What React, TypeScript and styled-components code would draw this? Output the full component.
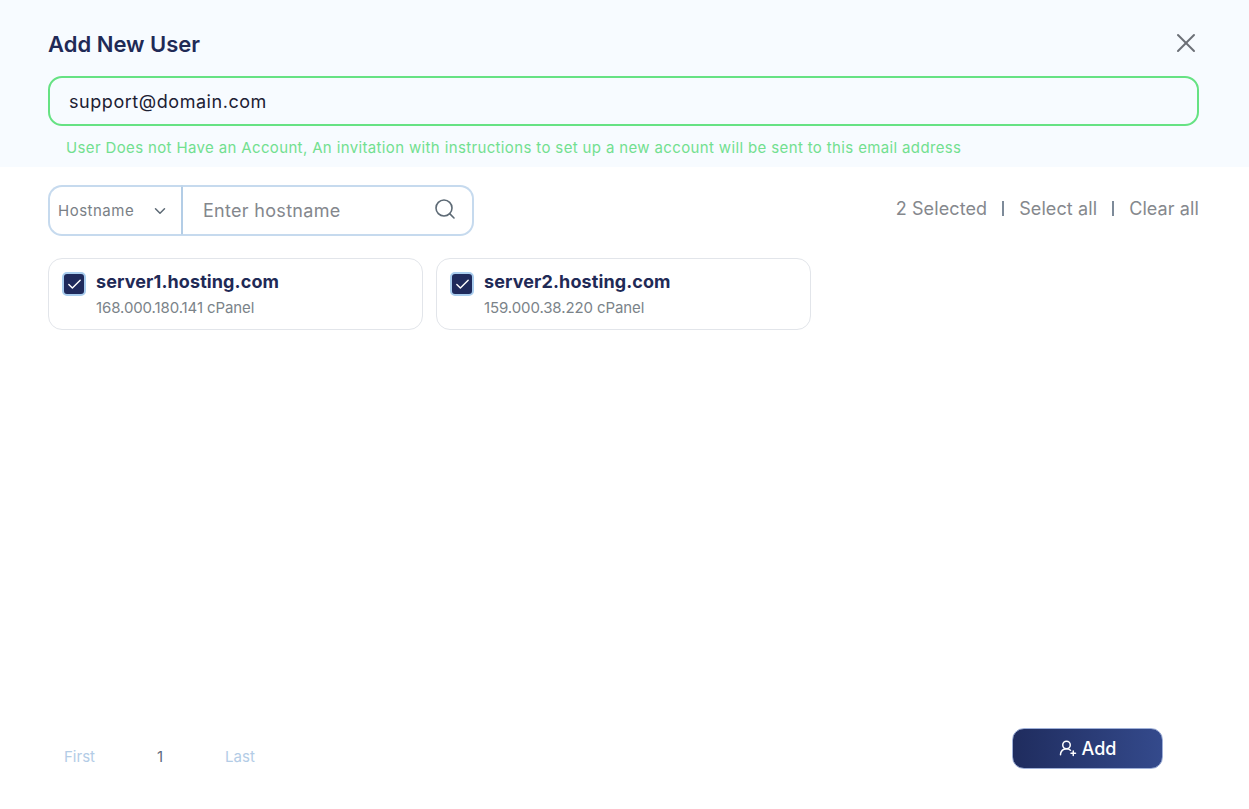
import React from "react";
import styled, {createGlobalStyle} from "styled-components";
import {ChevronDown, Search, X, Check, UserRoundPlus} from "lucide-react";

const GlobalStyle = createGlobalStyle`
  html, body {
    margin: 0;
    background: #fff;
    font-family: "Inter", "Noto Sans", sans-serif;
  }
`

const Page = styled.div`
  width: 1249px;
  height: 809px;
  display: flex;
  flex-direction: column;
  overflow: hidden;
`

const Header = styled.div`
  height: 167px;
  box-sizing: border-box;
  background: #f7fbff;
  padding: 29px 50px 0 48px;
  display: flex;
  flex-direction: column;
`

const TitleRow = styled.div`
  display: flex;
  justify-content: space-between;
  align-items: center;
  height: 31px;
`

const Title = styled.h2`
  margin: 0;
  font-size: 22px;
  line-height: 31px;
  font-weight: 600;
  color: #1f2a56;
`

const CloseIcon = styled(X)`
  color: #6b6f76;
  margin-right: -3px;
  margin-top: -4px;
`

const EmailBox = styled.div`
  margin-top: 16px;
  height: 50px;
  box-sizing: border-box;
  border: 2px solid #66e283;
  border-radius: 14px;
  padding: 0 19px;
  display: flex;
  align-items: center;
  font-size: 18px;
  letter-spacing: 0.55px;
  color: #1c2033;
`

const Hint = styled.p`
  margin: 12px 0 0 18px;
  font-size: 15px;
  line-height: 20px;
  letter-spacing: 0.36px;
  color: #72e08f;
`

const Content = styled.div`
  flex: 1;
  padding: 18px 50px 0 48px;
  display: flex;
  flex-direction: column;
`

const Toolbar = styled.div`
  display: flex;
  justify-content: space-between;
  align-items: center;
`

const SearchGroup = styled.div`
  display: flex;
  height: 51px;
  width: 426px;
`

const SelectBox = styled.div`
  width: 134px;
  box-sizing: border-box;
  border: 2px solid #c6daee;
  border-right: 1px solid #b3cde6;
  border-radius: 14px 0 0 14px;
  padding: 0 12px 0 8px;
  display: flex;
  align-items: center;
  justify-content: space-between;
  font-size: 15px;
  letter-spacing: 0.5px;
  color: #7a7f86;
`

const SearchBox = styled.div`
  flex: 1;
  box-sizing: border-box;
  border: 2px solid #c6daee;
  border-left: 1px solid #b3cde6;
  border-radius: 0 14px 14px 0;
  padding: 0 15px 0 20px;
  display: flex;
  align-items: center;
  justify-content: space-between;
  font-size: 18px;
  letter-spacing: 0.3px;
  color: #84878d;
`

const SearchIcon = styled(Search)`
  color: #5d6a75;
  margin-top: -4px;
`

const SelectionActions = styled.div`
  display: flex;
  align-items: center;
  gap: 15px;
  margin-top: -4px;
  font-size: 18px;
  letter-spacing: 0.1px;
  color: #85888d;
`

const Divider = styled.span`
  width: 2px;
  height: 15px;
  background: #7d8a99;
`

const ServerList = styled.div`
  display: flex;
  gap: 13px;
  margin-top: 22px;
`

const ServerCard = styled.div`
  width: 375px;
  height: 72px;
  box-sizing: border-box;
  border: 1px solid #e2e5ea;
  border-radius: 14px;
  padding: 11px 13px;
  display: flex;
  gap: 10px;
`

const CheckBox = styled.span`
  width: 20px;
  height: 20px;
  margin-top: 2px;
  border: 2px solid #a9cdee;
  border-radius: 5px;
  background: #1f2a5c;
  display: flex;
  align-items: center;
  justify-content: center;
  color: #fff;
`

const ServerInfo = styled.div`
  display: flex;
  flex-direction: column;
`

const ServerName = styled.span`
  font-size: 18px;
  line-height: 24px;
  font-weight: 700;
  letter-spacing: 0.1px;
  color: #1f2a56;
`

const ServerMeta = styled.span`
  margin-top: 3px;
  font-size: 15px;
  line-height: 22px;
  letter-spacing: -0.1px;
  color: #7b8389;
`

const Footer = styled.div`
  display: flex;
  justify-content: space-between;
  align-items: center;
  padding: 0 86px 40px 64px;
`

const Pagination = styled.div`
  display: flex;
  align-items: center;
  gap: 62px;
  font-size: 15px;
  padding-top: 15px;
`

const PageLink = styled.span<{active?: boolean}>`
  color: ${p => p.active ? '#5f6b7d' : '#b3cce6'};
`

const AddButton = styled.button`
  width: 151px;
  height: 41px;
  border: 1px solid #9fb0d8;
  border-radius: 12px;
  background: linear-gradient(90deg, #1f2c5e, #344a8c);
  color: #fff;
  font: 500 18px "Inter", sans-serif;
  display: flex;
  align-items: center;
  justify-content: center;
  gap: 5px;
`

const AddIcon = styled(UserRoundPlus)`
  margin-top: -1px;
`

const servers = [
    {name: 'server1.hosting.com', ip: '168.000.180.141 cPanel'},
    {name: 'server2.hosting.com', ip: '159.000.38.220 cPanel'},
]

function App() {
    return (
        <Page>
            <GlobalStyle/>
            <Header>
                <TitleRow>
                    <Title>Add New User</Title>
                    <CloseIcon size={32} strokeWidth={1.5}/>
                </TitleRow>
                <EmailBox>support@domain.com</EmailBox>
                <Hint>User Does not Have an Account, An invitation with instructions to set up a new account will be sent to this email address</Hint>
            </Header>
            <Content>
                <Toolbar>
                    <SearchGroup>
                        <SelectBox>
                            Hostname
                            <ChevronDown size={18} strokeWidth={2} color="#5d6a75"/>
                        </SelectBox>
                        <SearchBox>
                            Enter hostname
                            <SearchIcon size={24} strokeWidth={1.6}/>
                        </SearchBox>
                    </SearchGroup>
                    <SelectionActions>
                        <span>2 Selected</span>
                        <Divider/>
                        <span>Select all</span>
                        <Divider/>
                        <span>Clear all</span>
                    </SelectionActions>
                </Toolbar>
                <ServerList>
                    {servers.map(server => (
                        <ServerCard key={server.name}>
                            <CheckBox><Check size={17} strokeWidth={2}/></CheckBox>
                            <ServerInfo>
                                <ServerName>{server.name}</ServerName>
                                <ServerMeta>{server.ip}</ServerMeta>
                            </ServerInfo>
                        </ServerCard>
                    ))}
                </ServerList>
            </Content>
            <Footer>
                <Pagination>
                    <PageLink>First</PageLink>
                    <PageLink active>1</PageLink>
                    <PageLink>Last</PageLink>
                </Pagination>
                <AddButton><AddIcon size={18} strokeWidth={2}/>Add</AddButton>
            </Footer>
        </Page>
    );
}

export default App;
